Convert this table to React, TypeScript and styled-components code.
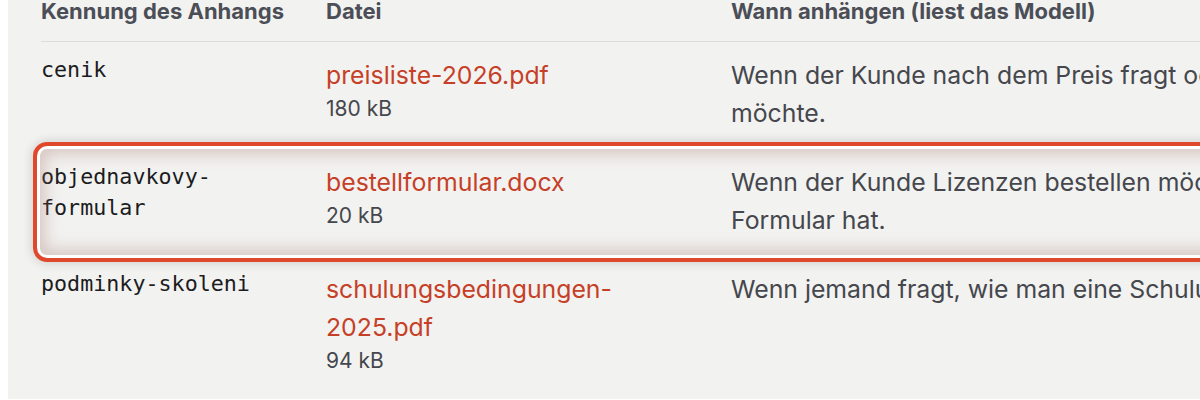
import React from "react";
import styled, { createGlobalStyle } from "styled-components";

const Global = createGlobalStyle`
  html, body { margin: 0; padding: 0; background: #ffffff; }
  body { font-family: Inter, "Noto Sans", sans-serif; }
`;

const Page = styled.div`
  padding-left: 8px;
  height: 400px;
  overflow: hidden;
`;

const Panel = styled.div`
  background: #f2f2f0;
  height: 399px;
  padding-left: 33px;
  overflow: hidden;
`;

const Table = styled.div`
  margin-top: -4px;
  width: 1500px;
`;

const Row = styled.div<{ $head?: boolean; $highlight?: boolean }>`
  display: grid;
  grid-template-columns: 285px 405px 780px;
  position: relative;
  padding: ${(p) => (p.$head ? "0 0 15px" : "14px 0 17px")};
  border-bottom: ${(p) => (p.$head ? "1px solid #dddcda" : "none")};
  ${(p) =>
    p.$highlight &&
    `
    &::after {
      content: "";
      position: absolute;
      left: -8px;
      top: -7px;
      bottom: -6px;
      right: -40px;
      border: 4px solid #e0482c;
      border-radius: 14px;
      box-shadow:
        0 0 10px 2px rgba(0, 0, 0, 0.12),
        inset 0 0 0 3px #ffffff,
        inset 0 0 16px 8px rgba(170, 125, 115, 0.38);
      pointer-events: none;
    }
  `}
`;

const Head = styled.div`
  font-family: Inter, sans-serif;
  font-weight: 700;
  font-size: 22px;
  line-height: 30px;
  color: #4b4e56;
  white-space: nowrap;
`;

const Key = styled.div`
  font-family: "DejaVu Sans Mono", monospace;
  font-size: 21.7px;
  line-height: 31px;
  color: #1c1c1e;
  padding-right: 30px;
  margin-top: -2px;
`;

const FileCell = styled.div`
  display: flex;
  flex-direction: column;
  padding-right: 50px;
`;

const FileLink = styled.span`
  font-family: Inter, sans-serif;
  font-size: 24.8px;
  line-height: 38px;
  color: #c63f27;
`;

const Size = styled.span`
  font-family: Inter, sans-serif;
  font-size: 21px;
  line-height: 30px;
  color: #45474d;
`;

const Desc = styled.div`
  font-family: Inter, sans-serif;
  font-size: 24.8px;
  line-height: 38px;
  color: #45474d;
`;

const rows = [
  {
    key: "cenik",
    file: "preisliste-2026.pdf",
    size: "180 kB",
    desc: "Wenn der Kunde nach dem Preis fragt oder ein Angebot haben möchte.",
  },
  {
    key: "objednavkovy-formular",
    file: "bestellformular.docx",
    size: "20 kB",
    desc: "Wenn der Kunde Lizenzen bestellen möchte und noch kein Formular hat.",
    highlight: true,
  },
  {
    key: "podminky-skoleni",
    file: "schulungsbedingungen-2025.pdf",
    size: "94 kB",
    desc: "Wenn jemand fragt, wie man eine Schulung bucht.",
  },
];

export default function App() {
  return (
    <>
      <Global />
      <Page>
        <Panel>
          <Table>
            <Row $head>
              <Head>Kennung des Anhangs</Head>
              <Head>Datei</Head>
              <Head>Wann anhängen (liest das Modell)</Head>
            </Row>
            {rows.map((r) => (
              <Row key={r.key} $highlight={r.highlight}>
                <Key>{r.key}</Key>
                <FileCell>
                  <FileLink>{r.file}</FileLink>
                  <Size>{r.size}</Size>
                </FileCell>
                <Desc>{r.desc}</Desc>
              </Row>
            ))}
          </Table>
        </Panel>
      </Page>
    </>
  );
}
